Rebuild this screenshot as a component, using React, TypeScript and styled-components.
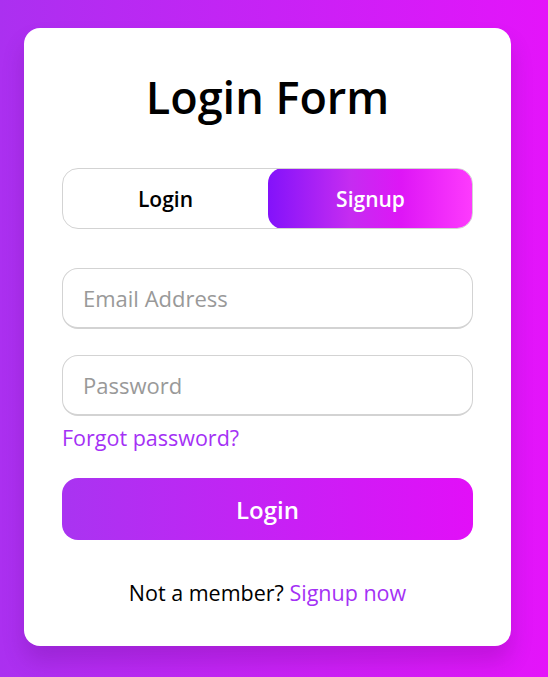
import React from "react";
import styled, { createGlobalStyle } from "styled-components";

const GlobalStyle = createGlobalStyle`
  * { box-sizing: border-box; }
  html, body { margin: 0; padding: 0; }
  body {
    font-family: "Open Sans", "Noto Sans", sans-serif;
    color: #000;
  }
`;

const Page = styled.div`
  min-height: 100vh;
  padding: 28px 0 0 24px;
  background: linear-gradient(to right, #ab30f0, #e414fa);
`;

const Card = styled.div`
  width: 487px;
  height: 618px;
  background: #fff;
  border-radius: 16px;
  padding: 39px 38px 0;
  box-shadow: 0 15px 22px rgba(60, 0, 90, 0.18);
  display: flex;
  flex-direction: column;
`;

const Title = styled.h1`
  margin: 0;
  font-size: 45px;
  line-height: 60px;
  font-weight: 600;
  text-align: center;
`;

const Toggle = styled.div`
  margin-top: 41px;
  height: 61px;
  display: flex;
  border: 1px solid #d3d3d3;
  border-radius: 16px;
  overflow: hidden;
`;

const Tab = styled.button<{ $active?: boolean }>`
  flex: 1;
  border: none;
  margin: ${(p) => (p.$active ? "-1px -1px -1px 0" : "0")};
  border-radius: ${(p) => (p.$active ? "15px" : "0")};
  background: ${(p) =>
    p.$active
      ? "linear-gradient(to right, #8312fa, #c52cf1 40%, #de16f6 65%, #fe3bfd)"
      : "transparent"};
  color: ${(p) => (p.$active ? "#fff" : "#000")};
  font-family: inherit;
  font-size: 21px;
  font-weight: 600;
  cursor: pointer;
`;

const Field = styled.input<{ $gap: number }>`
  margin-top: ${(p) => p.$gap}px;
  width: 100%;
  height: 61px;
  border: 1px solid #d3d3d3;
  border-bottom-width: 2px;
  border-radius: 16px;
  padding: 0 20px;
  font-family: inherit;
  font-size: 22px;
  outline: none;
  &::placeholder {
    color: #999;
  }
`;

const Forgot = styled.a`
  margin-top: 7px;
  align-self: flex-start;
  font-size: 21.5px;
  color: #a431f5;
  text-decoration: none;
`;

const Submit = styled.button`
  margin-top: 26px;
  height: 62px;
  border: none;
  border-radius: 16px;
  background: linear-gradient(to right, #a934f1, #e20ff8);
  color: #fff;
  font-family: inherit;
  font-size: 24px;
  font-weight: 600;
  cursor: pointer;
`;

const Footer = styled.p`
  margin: 38px 0 0;
  text-align: center;
  font-size: 21.5px;
`;

const FooterLink = styled.a`
  color: #a431f5;
  text-decoration: none;
`;

export default function App() {
  return (
    <>
      <GlobalStyle />
      <Page>
        <Card>
          <Title>Login Form</Title>
          <Toggle>
            <Tab>Login</Tab>
            <Tab $active>Signup</Tab>
          </Toggle>
          <Field $gap={39} type="text" placeholder="Email Address" />
          <Field $gap={26} type="password" placeholder="Password" />
          <Forgot href="#">Forgot password?</Forgot>
          <Submit>Login</Submit>
          <Footer>
            Not a member? <FooterLink href="#">Signup now</FooterLink>
          </Footer>
        </Card>
      </Page>
    </>
  );
}
